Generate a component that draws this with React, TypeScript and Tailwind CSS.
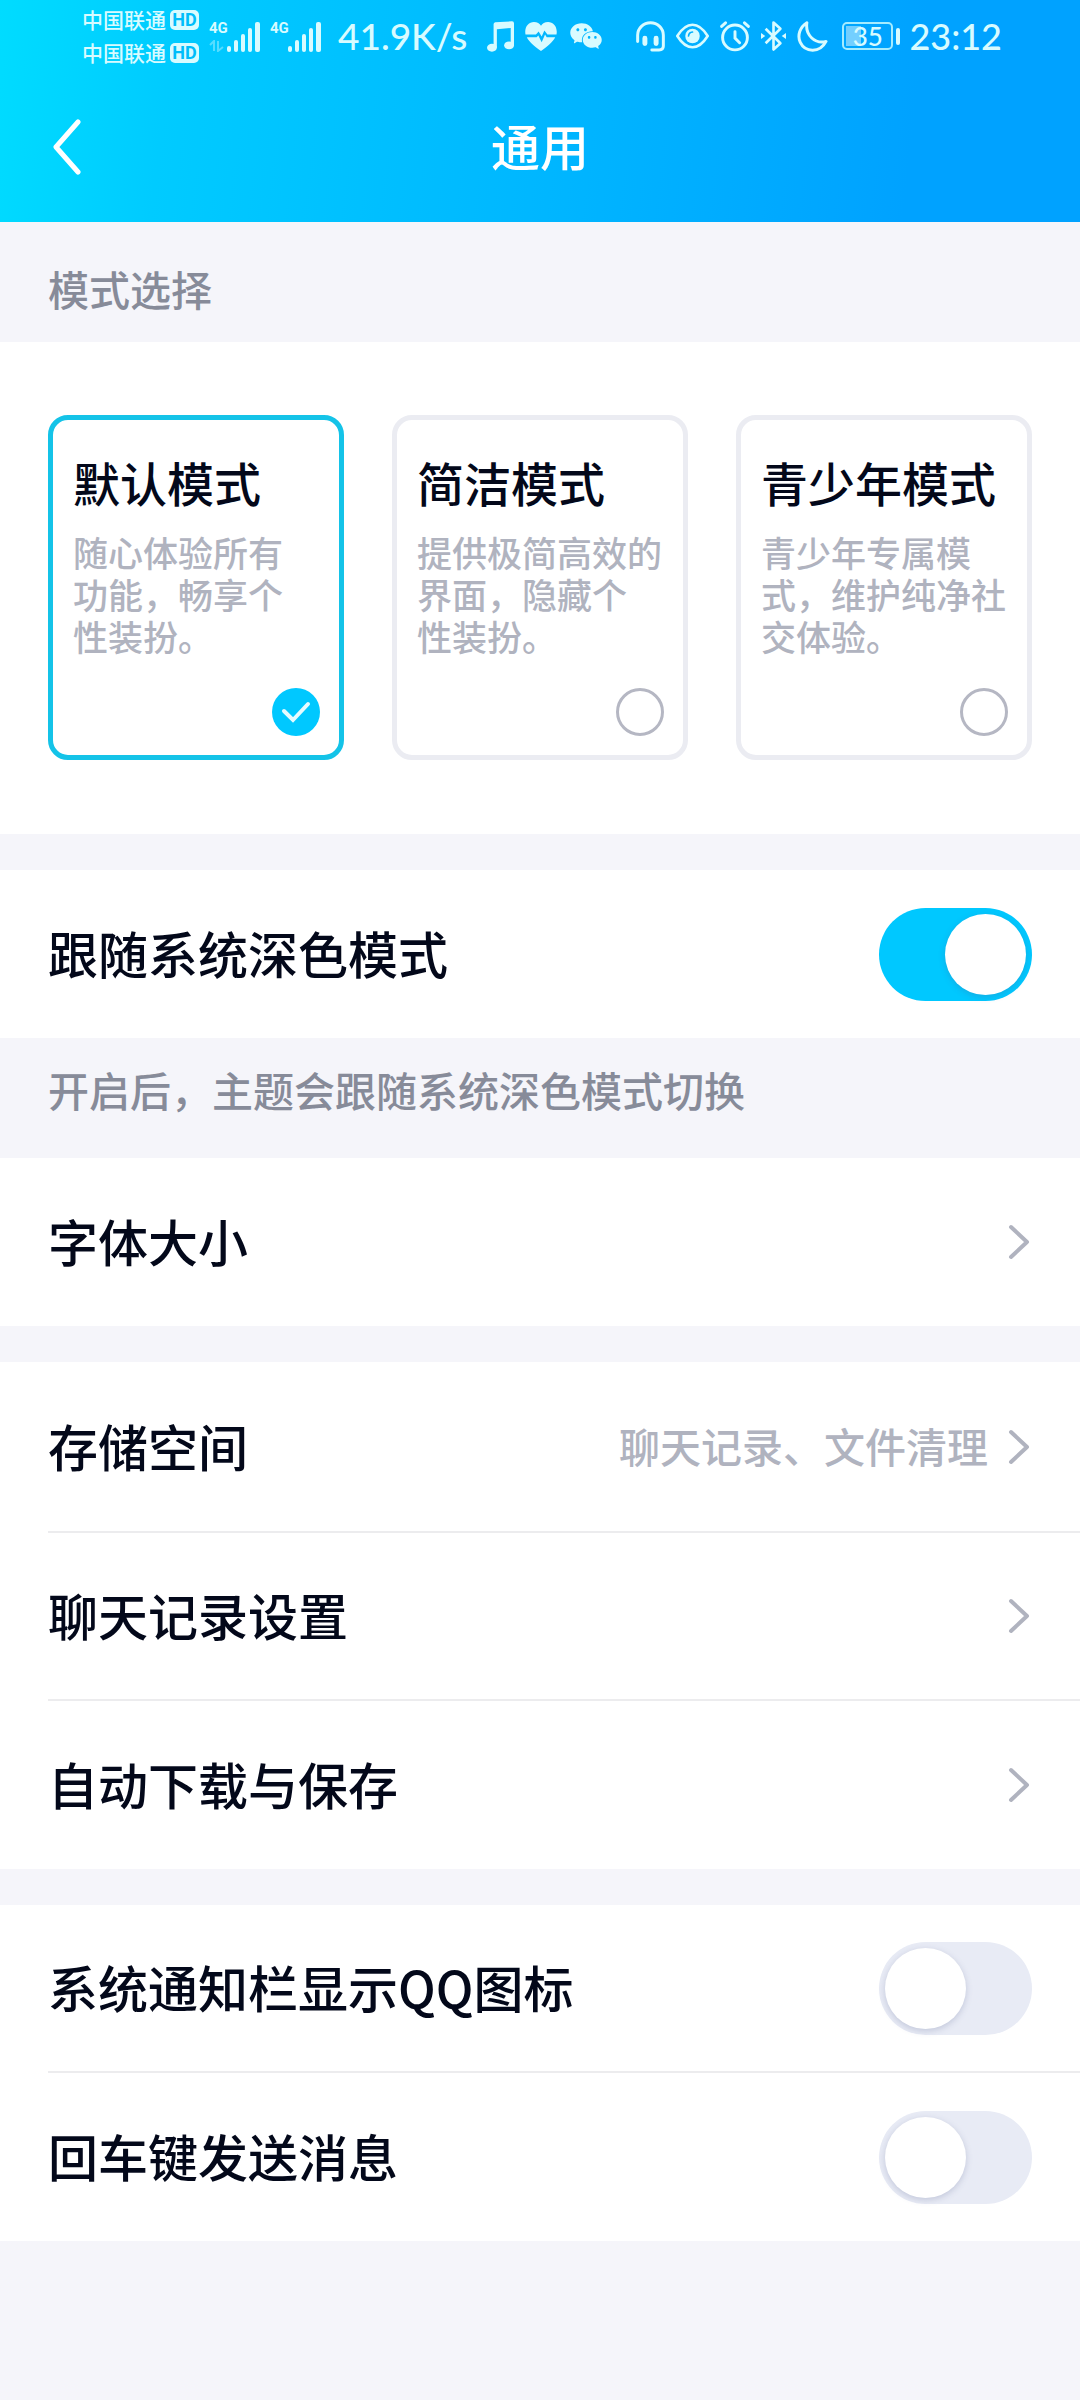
import { useState, type ReactNode } from 'react'
import { AiFillWechat } from 'react-icons/ai'

const modes = [
  { id: 'default', title: '默认模式', desc: '随心体验所有\n功能，畅享个\n性装扮。' },
  { id: 'simple', title: '简洁模式', desc: '提供极简高效的\n界面，隐藏个\n性装扮。' },
  { id: 'teen', title: '青少年模式', desc: '青少年专属模\n式，维护纯净社\n交体验。' },
]

function Carrier() {
  return (
    <div className="flex items-center gap-1 h-[33px]">
      <span className="text-[21px] leading-8 pb-px font-medium">中国联通</span>
      <span className="w-[29px] h-5 rounded-[5px] bg-[#d8fbff] text-[#00bdfa] text-[18px] leading-5 font-bold text-center font-['Roboto',sans-serif]">HD</span>
    </div>
  )
}

function Signal({ data = false }: { data?: boolean }) {
  return (
    <div className="flex items-end h-8">
      <div className="flex flex-col justify-between w-[18px] h-8">
        <span className="text-[15px] leading-[16px] font-bold font-['Roboto',sans-serif]">4G</span>
        {data && (
          <svg viewBox="0 0 16 12" className="w-4 h-3 opacity-40" fill="none" stroke="currentColor" strokeWidth="2">
            <path d="M1 5l4-4v10M9 1v10l5-4" />
          </svg>
        )}
      </div>
      <svg viewBox="0 0 33 31" className="w-[33px] h-[31px]" fill="currentColor">
        <rect x="0" y="25" width="4" height="6" rx="2" />
        <rect x="7" y="19" width="4" height="12" rx="2" />
        <rect x="14" y="13" width="4" height="18" rx="2" />
        <rect x="21" y="7" width="4" height="24" rx="2" />
        <rect x="28" y="1" width="5" height="30" rx="2" />
      </svg>
    </div>
  )
}

function MusicIcon() {
  return (
    <svg viewBox="0 0 82 92" className="w-[27px] h-[31px]" fill="currentColor">
      <path d="M20 9Q20 4 25 3L76 0Q82 0 82 6V74H72V20L30 24V80H20Z" />
      <ellipse cx="15" cy="80" rx="15" ry="12" />
      <ellipse cx="67" cy="73" rx="15" ry="12" />
    </svg>
  )
}

function HeartIcon() {
  return (
    <svg viewBox="0 0 94 86" className="w-[32px] h-[29px]" fill="currentColor">
      <path d="M1 37C-3 15 10 0 26 0C36 0 43 5 47 11C51 5 58 0 68 0C84 0 97 15 93 37H66L57 25L49 43L40 28L32 37Z" />
      <path d="M5 45H34L39 40L49 60L59 37L64 45H89C83 58 67 71 47 86C27 71 11 58 5 45Z" />
    </svg>
  )
}

function HeadsetIcon() {
  return (
    <svg viewBox="0 0 88 94" className="w-[29px] h-[31px]" fill="none" stroke="currentColor" strokeWidth="9" strokeLinecap="round">
      <path d="M5 62V43A39 38 0 0 1 83 43V76Q83 88 70 88H48" />
      <path d="M27 52V68M61 52V68" strokeWidth="15" />
    </svg>
  )
}

function EyeIcon() {
  return (
    <svg viewBox="0 0 100 78" className="w-[33px] h-[26px]" fill="none" stroke="currentColor" strokeWidth="8" strokeLinejoin="round">
      <path d="M4 39Q25 5 50 5T96 39Q75 73 50 73T4 39Z" />
      <circle cx="50" cy="39" r="22" fill="currentColor" stroke="none" />
      <path d="M38 39Q39 28 50 27" stroke="#00b0ff" strokeWidth="5" strokeLinecap="round" />
    </svg>
  )
}

function AlarmIcon() {
  return (
    <svg viewBox="0 0 92 94" className="w-[30px] h-[31px]" fill="none" stroke="currentColor" strokeWidth="9" strokeLinecap="round">
      <circle cx="46" cy="50" r="38" />
      <path d="M46 32V52L60 66M5 16L17 5M75 5L87 16" />
    </svg>
  )
}

function BluetoothIcon() {
  return (
    <svg viewBox="0 0 76 96" className="w-[25px] h-8" fill="none" stroke="currentColor" strokeWidth="8" strokeLinejoin="round">
      <path d="M14 26L59 70L38 89V7L59 26L14 70" />
      <path d="M0 39L13 48L0 57ZM76 39L63 48L76 57Z" fill="currentColor" stroke="none" />
    </svg>
  )
}

function MoonIcon() {
  return (
    <svg viewBox="0 0 92 94" className="w-[31px] h-[31px]" fill="none" stroke="currentColor" strokeWidth="9" strokeLinejoin="round">
      <path d="M29 5C8 18 -1 44 9 65C23 95 68 99 87 62C55 70 23 45 29 5Z" />
    </svg>
  )
}

function Battery() {
  return (
    <div className="flex items-center gap-[3px]">
      <div className="flex items-center w-[51px] h-[28px] p-[2px] rounded-[5px] border-2 border-[#a5ecff]">
        <div className="relative h-full w-full">
          <div className="absolute inset-y-0 left-0 w-[35%] bg-[#73cfff]" />
          <span className="relative block text-center text-[26px] leading-[20px] font-['Lato',sans-serif] font-medium">35</span>
        </div>
      </div>
      <div className="w-1 h-[17px] rounded-full bg-current" />
    </div>
  )
}

function StatusBar() {
  return (
    <div className="flex items-center h-[72px] pl-[82px] text-[#d8fbff] whitespace-nowrap">
      <div>
        <Carrier />
        <Carrier />
      </div>
      <div className="flex ml-[10px] gap-[10px]">
        <Signal data />
        <Signal />
      </div>
      <span className="ml-[17px] text-[37px] leading-[44px] font-['Lato',sans-serif] font-medium">41.9K/s</span>
      <div className="flex items-center ml-5 gap-[11px]">
        <MusicIcon />
        <HeartIcon />
        <AiFillWechat className="size-9" />
      </div>
      <div className="flex items-center ml-8 gap-[11px]">
        <HeadsetIcon />
        <EyeIcon />
        <AlarmIcon />
        <BluetoothIcon />
        <MoonIcon />
      </div>
      <div className="flex items-center ml-[14px] gap-[9px]">
        <Battery />
        <span className="text-[36px] leading-[44px] font-['Lato',sans-serif] font-medium">23:12</span>
      </div>
    </div>
  )
}

function Chevron() {
  return (
    <svg viewBox="0 0 24 36" className="w-6 h-9 shrink-0" fill="none" stroke="#b0b3bf" strokeWidth="4" strokeLinecap="round" strokeLinejoin="round">
      <path d="M3 3L19 18L3 33" />
    </svg>
  )
}

function LinkRow({ title, note }: { title: string; note?: string }) {
  return (
    <a href="#" className={`flex items-center pr-12 ${note ? 'h-[171px]' : 'h-[168px]'}`}>
      <span className="flex-1 pb-1 text-[50px] leading-[60px] font-medium">{title}</span>
      {note && <span className="mr-5 pb-1 text-[41px] leading-[60px] font-medium text-[#b0b3bf]">{note}</span>}
      <Chevron />
    </a>
  )
}

function SwitchRow({ title, on = false }: { title: string; on?: boolean }) {
  const [checked, setChecked] = useState(on)
  return (
    <label className="flex items-center justify-between h-[168px] pr-12">
      <span className="pb-1 text-[50px] leading-[60px] font-medium">{title}</span>
      <input
        type="checkbox"
        role="switch"
        checked={checked}
        onChange={e => setChecked(e.target.checked)}
        className="appearance-none flex items-center w-[153px] h-[93px] px-[6px] rounded-full bg-[#e8ebf5] checked:bg-[#00c8ff] checked:justify-end before:size-[81px] before:rounded-full before:bg-white before:shadow-[0_2px_6px_rgba(80,90,140,0.25)]"
      />
    </label>
  )
}

function Group({ children }: { children: ReactNode }) {
  return <section className="bg-white pl-12 divide-y-2 divide-[#ececee]">{children}</section>
}

export default function App() {
  const [mode, setMode] = useState('default')

  return (
    <div lang="zh-CN" className="min-h-screen bg-[#f5f5fa] text-[#03081a] font-['Noto_Sans_CJK_SC',sans-serif]">
      <header className="bg-[linear-gradient(97deg,#00dcff_0%,#00cbff_16%,#00b7ff_50%,#00a2ff_84%)]">
        <StatusBar />
        <div className="grid grid-cols-[1fr_auto_1fr] items-center h-[150px] px-12 text-white">
          <button type="button" aria-label="返回" className="justify-self-start">
            <svg viewBox="0 0 36 56" className="w-9 h-14" fill="none" stroke="currentColor" strokeWidth="5" strokeLinecap="round" strokeLinejoin="round">
              <path d="M30 3L8 28L30 53" />
            </svg>
          </button>
          <h1 className="pb-1 text-[49px] leading-[60px] font-medium">通用</h1>
        </div>
      </header>

      <h2 className="px-12 pt-9 pb-6 text-[41px] leading-[60px] font-medium text-[#878b99]">模式选择</h2>

      <section className="grid grid-cols-3 gap-12 bg-white px-12 pt-[73px] pb-[74px]">
        {modes.map(m => (
          <label
            key={m.id}
            className="flex flex-col min-h-[345px] pt-[34px] pb-[19px] pl-5 pr-[19px] rounded-[20px] border-5 border-[#ebecf2] has-checked:border-[#14c3e8]"
          >
            <span className="text-[47px] leading-[56px] font-medium whitespace-nowrap">{m.title}</span>
            <span className="mt-[21px] text-[35px] leading-[42px] font-medium text-[#b0b3bf] whitespace-pre">{m.desc}</span>
            <span className="relative size-12 mt-auto self-end">
              <input
                type="radio"
                name="mode"
                checked={mode === m.id}
                onChange={() => setMode(m.id)}
                className="peer block appearance-none size-12 rounded-full border-3 border-[#b5b7c3] checked:border-0 checked:bg-[#00c8ff]"
              />
              <svg viewBox="0 0 48 48" className="absolute inset-0 hidden peer-checked:block" fill="none" stroke="#e6fbff" strokeWidth="4" strokeLinecap="round">
                <path d="M12 23L21 32L36 16" />
              </svg>
            </span>
          </label>
        ))}
      </section>

      <div className="mt-9">
        <Group>
          <SwitchRow title="跟随系统深色模式" on />
        </Group>
        <p className="px-12 pt-[21px] pb-[39px] text-[41px] leading-[60px] font-medium text-[#878b99]">开启后，主题会跟随系统深色模式切换</p>
      </div>

      <div className="flex flex-col gap-9">
        <Group>
          <LinkRow title="字体大小" />
        </Group>
        <Group>
          <LinkRow title="存储空间" note="聊天记录、文件清理" />
          <LinkRow title="聊天记录设置" />
          <LinkRow title="自动下载与保存" />
        </Group>
        <Group>
          <SwitchRow title="系统通知栏显示QQ图标" />
          <SwitchRow title="回车键发送消息" />
        </Group>
      </div>
    </div>
  )
}
